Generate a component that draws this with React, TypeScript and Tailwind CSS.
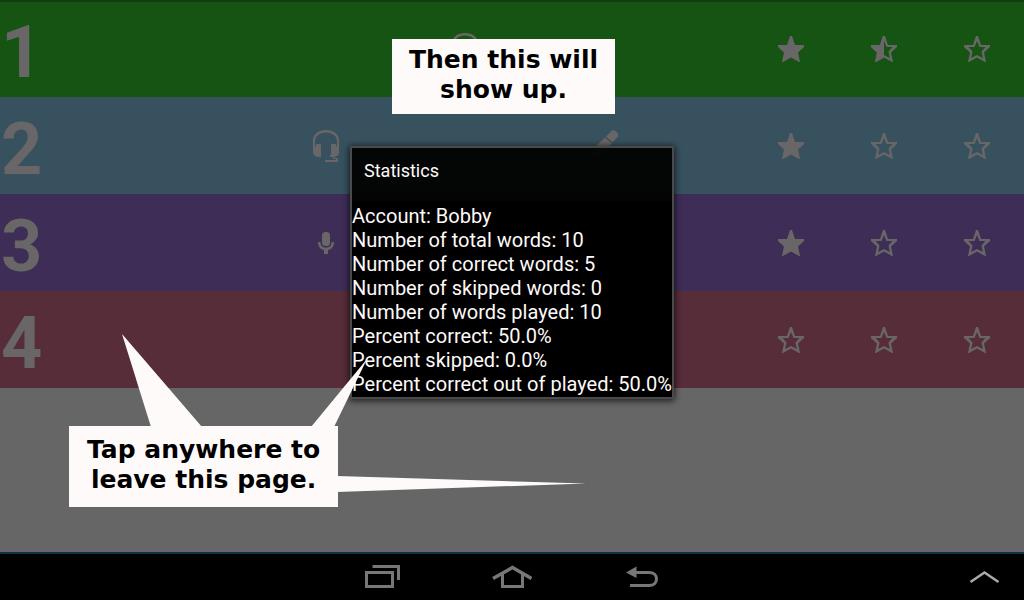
import type { ReactNode } from "react";

type StarKind = "full" | "half" | "empty";
type Activity = "headset" | "pencil" | "mic";

interface Level {
  number: number;
  color: string;
  activities: Activity[];
  stars: StarKind[];
}

const levels: Level[] = [
  { number: 1, color: "bg-[#165414]", activities: ["headset"], stars: ["full", "half", "empty"] },
  { number: 2, color: "bg-[#37525e]", activities: ["headset", "pencil"], stars: ["full", "empty", "empty"] },
  { number: 3, color: "bg-[#3e2d57]", activities: ["mic"], stars: ["full", "empty", "empty"] },
  { number: 4, color: "bg-[#572d3a]", activities: [], stars: ["empty", "empty", "empty"] },
];

const statistics = [
  "Account: Bobby",
  "Number of total words: 10",
  "Number of correct words: 5",
  "Number of skipped words: 0",
  "Number of words played: 10",
  "Percent correct: 50.0%",
  "Percent skipped: 0.0%",
  "Percent correct out of played: 50.0%",
];

const STAR_OUTER = "M12 0 H14 L17 9 H26 V11 L20 16.500 L22 26 H21 L13 21.500 L5 26 H4 L6 16.500 L0 11 V9 H9 Z";
const STAR_INNER = "M13 5 L10.500 11 H4.500 L8.500 15.500 L7.200 22 L13 19 L18.800 22 L17.500 15.500 L21.500 11 H15.500 Z";

function Star({ kind }: { kind: StarKind }) {
  return (
    <svg viewBox="0 0 26 26" className="h-[26px] w-[26px] fill-current" aria-hidden="true">
      <path d={kind === "full" ? STAR_OUTER : `${STAR_OUTER} ${STAR_INNER}`} fillRule="evenodd" />
      {kind === "half" && <path d="M13 0 V21.500 L5 26 H4 L6 16.500 L0 11 V9 H9 L12 0 Z" />}
    </svg>
  );
}

function ActivityIcon({ kind }: { kind: Activity }) {
  if (kind === "headset") {
    return (
      <svg viewBox="0 0 26 32" className="h-8 w-[26px] fill-current" aria-hidden="true">
        <path d="M0 19 V10 C0 4 6 0 13 0 C20 0 26 4 26 10 V19 H24 V11 C24 6 19 2.500 13 2.500 C7 2.500 2 6 2 11 V19 Z" />
        <path d="M3 14 H8 V27 H5 C2 26.500 0 25 0 22 V16 H3 Z" />
        <path d="M18 14 H23 V16 H26 V22 C26 24 25 25 24 26 L21 27 L18 25 Z" />
        <path d="M17 25 H20 L21.500 28 H25 V32 H12 V30 H23 V29 H20.500 L19.500 27 H17 Z" />
      </svg>
    );
  }
  if (kind === "mic") {
    return (
      <svg viewBox="0 0 16 22" className="h-[22px] w-4 fill-current" aria-hidden="true">
        <rect x="4" width="8" height="14" rx="3.500" />
        <path d="M0 10 H2.500 C2.500 14 4.500 15.500 8 15.500 C11.500 15.500 13.500 14 13.500 10 H16 C16 14.500 13.500 17.500 10 18 V22 H6 V18 C2.500 17.500 0 14.500 0 10 Z" />
      </svg>
    );
  }
  return (
    <svg viewBox="0 0 26 26" className="h-[26px] w-[26px] fill-current" aria-hidden="true">
      <path d="M0 26 L4 16 L13 7.500 L20 13.500 L10 23 Z" />
      <path d="M14 6.500 L20 0.500 H23 L26 3.500 V6.500 L20.500 12.500 Z" />
    </svg>
  );
}

function LevelRow({ level }: { level: Level }) {
  return (
    <li className={`grid h-[97px] grid-cols-11 items-center text-[#696667] ${level.color}`}>
      <span className="col-span-2 pt-2 pl-px text-7xl leading-none font-bold">{level.number}</span>
      <div className="col-span-6 flex">
        {level.activities.map((kind) => (
          <span key={kind} className="flex flex-1 justify-center">
            <ActivityIcon kind={kind} />
          </span>
        ))}
        {level.number === 3 && <span className="flex-1" />}
      </div>
      {level.stars.map((kind, index) => (
        <span key={index} className="flex justify-center">
          <Star kind={kind} />
        </span>
      ))}
    </li>
  );
}

function Callout({ className, children }: { className: string; children: ReactNode }) {
  return (
    <p
      className={`absolute bg-[#fffafa] text-center font-['DejaVu_Sans',sans-serif] text-[25px] leading-[30px] font-bold text-black ${className}`}
    >
      {children}
    </p>
  );
}

function StatisticsDialog() {
  return (
    <section
      role="dialog"
      aria-labelledby="statistics-title"
      className="rounded-[2px] border-2 border-[#4a4a4a] text-[#fffafa] shadow-[0_1px_6px_1px_rgba(0,0,0,0.7)]"
    >
      <h1 id="statistics-title" className="flex h-[53px] items-center bg-black/93 px-3 pb-2 text-lg leading-6">
        Statistics
      </h1>
      <ul className="bg-black pt-[3px] pb-px text-xl leading-6 whitespace-nowrap">
        {statistics.map((line) => (
          <li key={line}>{line}</li>
        ))}
      </ul>
    </section>
  );
}

function NavigationBar() {
  return (
    <nav className="relative flex h-12 items-center justify-center gap-[62px] border-t-2 border-[#0b3341] bg-black text-[#777]">
      <button type="button" aria-label="Recent apps" className="flex w-[68px] justify-center">
        <svg viewBox="0 0 35 24" className="h-6 w-[35px] fill-none stroke-current" strokeWidth="3" aria-hidden="true">
          <rect x="1.500" y="7.500" width="26" height="14" />
          <path d="M7.500 1.500 H33.500 V15" />
        </svg>
      </button>
      <button type="button" aria-label="Home" className="flex w-[68px] justify-center">
        <svg viewBox="0 0 40 24" className="h-6 w-10 fill-none stroke-current" strokeWidth="3.5" aria-hidden="true">
          <path d="M1 13.500 L20.500 2.500 L39.500 13.500" />
          <path d="M10.500 9 V21.500 H30.500 V9" strokeWidth="3" />
        </svg>
      </button>
      <button type="button" aria-label="Back" className="flex w-[68px] justify-center">
        <svg viewBox="0 0 32 24" className="h-6 w-8 fill-none stroke-current" strokeWidth="3" aria-hidden="true">
          <path d="M8 7.500 H23 C28 7.500 30.500 10.500 30.500 14 C30.500 17.500 28 20.500 23 20.500 H4" />
          <path d="M0 7.500 L10.500 1.500 V13 Z" className="fill-current stroke-none" />
        </svg>
      </button>
      <button type="button" aria-label="Show more" className="absolute right-6 text-[#aaa]">
        <svg viewBox="0 0 32 14" className="h-3.5 w-8 fill-none stroke-current" strokeWidth="2.5" aria-hidden="true">
          <path d="M2.500 12 L16.500 2.500 L30.500 12" />
        </svg>
      </button>
    </nav>
  );
}

export default function App() {
  return (
    <div className="flex min-h-screen flex-col bg-[#666] font-[Roboto,sans-serif]">
      <main className="relative flex-1">
        <ul>
          {levels.map((level) => (
            <LevelRow key={level.number} level={level} />
          ))}
        </ul>
        <div className="absolute inset-x-0 top-0 h-0.5 bg-black/25" />

        <div className="absolute inset-0 flex items-center justify-center pb-[7px]">
          <StatisticsDialog />
        </div>

        <svg
          viewBox="0 0 600 520"
          className="absolute top-0 left-0 h-[520px] w-[600px] fill-[#fffafa]"
          aria-hidden="true"
        >
          <path d="M122 334 L151 427 H202 Z" />
          <path d="M367 359 L311 427 H334 Z" />
          <path d="M586 483.500 L337 476 V492 Z" />
        </svg>
        <Callout className="top-[39px] left-[392px] px-[17px] pt-1.5 pb-[9px]">
          Then this will
          <br />
          show up.
        </Callout>
        <Callout className="top-[426px] left-[69px] px-[18px] pt-[9px] pb-3">
          Tap anywhere to
          <br />
          leave this page.
        </Callout>
      </main>
      <NavigationBar />
    </div>
  );
}
